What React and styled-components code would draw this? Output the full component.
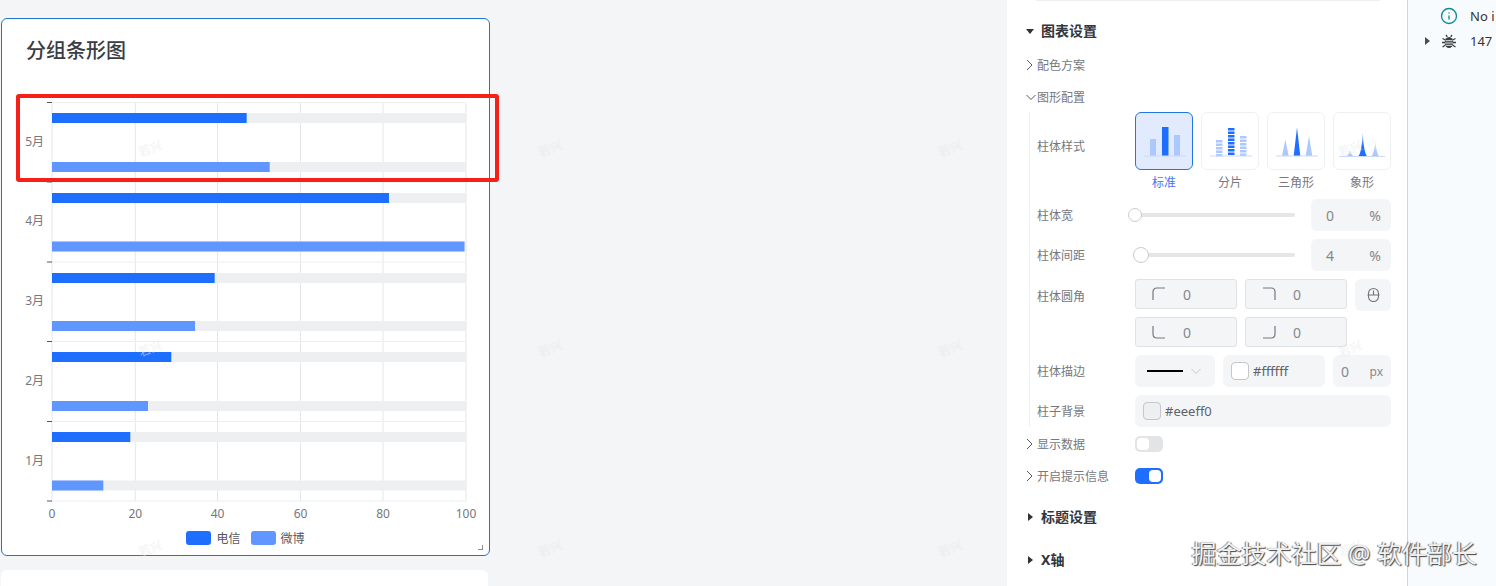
import React from "react";
import styled, { createGlobalStyle } from "styled-components";
import { Info } from "lucide-react";

const FONT = `"Noto Sans", "Noto Sans CJK SC", sans-serif`;

const months = [
  { name: "5月", top: 102.5, bars: [246.7, 269.7], y: [113, 162] },
  { name: "4月", top: 182, bars: [389, 464.5], y: [193, 241.5] },
  { name: "3月", top: 262, bars: [214.7, 195], y: [273, 321] },
  { name: "2月", top: 341.5, bars: [171.3, 148], y: [352, 401] },
  { name: "1月", top: 421.5, bars: [130.3, 103.3], y: [432, 480.5] },
];
const xTicks = [
  { x: 52, label: "0" },
  { x: 135.3, label: "20" },
  { x: 217.5, label: "40" },
  { x: 300.5, label: "60" },
  { x: 383, label: "80" },
  { x: 466, label: "100" },
];
const BLUE = "#1e6fff";
const LIGHT_BLUE = "#6096ff";
const PALE_BLUE = "#abc8ff";

const GroupedBars = () => (
  <ChartSvg viewBox="2 95 486 430" width="486" height="430">
    {xTicks.map((t) => (
      <line key={t.x} x1={t.x} x2={t.x} y1="102.5" y2="501" stroke="#e4e6e9" />
    ))}
    {[...months.map((m) => m.top), 501].map((y) => (
      <g key={y}>
        <line x1="52" x2="466" y1={y} y2={y} stroke="#eceef0" />
        <line x1="47" x2="52" y1={y} y2={y} stroke="#55585e" />
      </g>
    ))}
    {months.map((m) => (
      <g key={m.name}>
        {m.y.map((y, i) => (
          <g key={y}>
            <rect x="52" y={y} width="414" height="10" fill="#eeeff0" />
            <rect x="52" y={y} width={m.bars[i] - 52} height="10" fill={i === 0 ? BLUE : LIGHT_BLUE} />
          </g>
        ))}
        <AxisText x="44" y={m.top + 43} textAnchor="end">
          {m.name}
        </AxisText>
      </g>
    ))}
    {xTicks.map((t) => (
      <AxisText key={t.label} x={t.x} y="518" textAnchor="middle">
        {t.label}
      </AxisText>
    ))}
  </ChartSvg>
);

const Baseline = () => <line x1="9" x2="51" y1="44" y2="44" stroke="#c9dafc" strokeWidth="1" />;

const ColumnIcon = () => (
  <svg width="58" height="58" viewBox="0 0 58 58">
    <rect x="15" y="27" width="6" height="17" fill={PALE_BLUE} />
    <rect x="27" y="15" width="6.5" height="29" fill={BLUE} />
    <rect x="39" y="23" width="6" height="21" fill={PALE_BLUE} />
    <Baseline />
  </svg>
);

const Slices = ({ x, top, fill }) => {
  const rows = [];
  for (let y = top; y < 43; y += 3.5) rows.push(y);
  return rows.map((y) => <rect key={y} x={x} y={y} width="6.5" height="2.5" fill={fill} />);
};

const SliceIcon = () => (
  <svg width="58" height="58" viewBox="0 0 58 58">
    <Slices x={15} top={28} fill={PALE_BLUE} />
    <Slices x={27} top={16} fill={BLUE} />
    <Slices x={39} top={24} fill={PALE_BLUE} />
    <Baseline />
  </svg>
);

const TriangleIcon = () => (
  <svg width="58" height="58" viewBox="0 0 58 58">
    <path d="M15 44 L18.3 27.5 L21.7 44Z" fill={PALE_BLUE} />
    <path d="M26.7 44 L30 15.5 L33.3 44Z" fill={BLUE} />
    <path d="M38.7 44 L42 24 L45.3 44Z" fill={PALE_BLUE} />
    <Baseline />
  </svg>
);

const PictorialIcon = () => (
  <svg width="58" height="58" viewBox="0 0 58 58">
    <defs>
      <linearGradient id="spikeDark" x1="0" y1="0" x2="0" y2="1">
        <stop offset="0" stopColor={BLUE} stopOpacity="0.1" />
        <stop offset="0.6" stopColor={BLUE} />
      </linearGradient>
      <linearGradient id="spikePale" x1="0" y1="0" x2="0" y2="1">
        <stop offset="0" stopColor={PALE_BLUE} stopOpacity="0.1" />
        <stop offset="0.7" stopColor={PALE_BLUE} />
      </linearGradient>
    </defs>
    <path d="M13 44.5 Q16 43 17 37 Q18 43 21 44.5Z" fill="url(#spikePale)" />
    <path d="M25 44.5 Q28.7 42 29.7 19 Q30.7 42 34.5 44.5Z" fill="url(#spikeDark)" />
    <path d="M38 44.5 Q41.3 42 42.3 28 Q43.3 42 46.5 44.5Z" fill="url(#spikePale)" />
    <line x1="6" x2="52" y1="44.5" y2="44.5" stroke="#c9dafc" />
  </svg>
);

const styleOptions = [
  { label: "标准", Icon: ColumnIcon, active: true },
  { label: "分片", Icon: SliceIcon },
  { label: "三角形", Icon: TriangleIcon },
  { label: "象形", Icon: PictorialIcon },
];

const corners = [
  "M1 13 V5 Q1 1 5 1 H13",
  "M1 1 H9 Q13 1 13 5 V13",
  "M1 1 V9 Q1 13 5 13 H13",
  "M13 1 V9 Q13 13 9 13 H1",
];

const CornerInput = ({ d }) => (
  <CornerBox>
    <svg width="14" height="14" viewBox="0 0 14 14" fill="none" stroke="#75787e" strokeWidth="1.2">
      <path d={d} />
    </svg>
    <span>0</span>
  </CornerBox>
);

const ArrowRight = () => (
  <svg width="11" height="12" viewBox="0 0 11 12" fill="none" stroke="#55585e" strokeWidth="1">
    <path d="M1 1 L6 6 L1 11" />
  </svg>
);

const ArrowDown = ({ color = "#55585e" }) => (
  <svg width="11" height="7" viewBox="0 0 11 7" fill="none" stroke={color} strokeWidth="1">
    <path d="M0.5 1 L5 5.5 L9.5 1" />
  </svg>
);

const LinkIcon = () => (
  <svg width="13" height="16" viewBox="0 0 13 16" fill="none" stroke="#6f7278" strokeWidth="1.1">
    <rect x="1.5" y="1.5" width="10" height="13" rx="5" />
    <path d="M0.5 8 H12.5 M6.5 3.5 V8" />
  </svg>
);

const BugIcon = () => (
  <svg width="16" height="16" viewBox="0 0 16 16">
    <g stroke="#3b3e42" strokeWidth="1.3" fill="none">
      <path d="M5 2 L6.3 3.8 M11 2 L9.7 3.8 M1.5 5.5 L4.5 7 M14.5 5.5 L11.5 7 M1 9.5 H4 M15 9.5 H12 M1.5 14 L4.5 12 M14.5 14 L11.5 12" />
    </g>
    <ellipse cx="8" cy="9.5" rx="4.3" ry="5.5" fill="#3b3e42" />
    <path d="M4.5 7.7 H11.5 M4 10 H12 M4.5 12.3 H11.5" stroke="#f7fbfe" strokeWidth="0.9" />
  </svg>
);

const stamps = Array.from({ length: 12 }, (_, i) => i);

export default function App() {
  return (
    <Page>
      <GlobalStyle />
      <LeftColumn>
        <ChartCard>
          <CardTitle>分组条形图</CardTitle>
          <GroupedBars />
          <Legend>
            <LegendItem>
              <Swatch $color={BLUE} />
              电信
            </LegendItem>
            <LegendItem>
              <Swatch $color={LIGHT_BLUE} />
              微博
            </LegendItem>
          </Legend>
          <ResizeHandle />
        </ChartCard>
        <NextCard />
      </LeftColumn>
      <Canvas />
      <SettingsPanel>
        <TopRule />
        <SectionHeader $gap={19}>
          <DownArrow />
          图表设置
        </SectionHeader>
        <SubRow $gap={13}>
          <Chevron>
            <ArrowRight />
          </Chevron>
          配色方案
        </SubRow>
        <SubRow $gap={12}>
          <Chevron>
            <ArrowDown />
          </Chevron>
          图形配置
        </SubRow>
        <Form>
          <FormRow>
            <FieldLabel $top={25}>柱体样式</FieldLabel>
            <StyleGrid>
              {styleOptions.map(({ label, Icon, active }) => (
                <StyleOption key={label} $active={active}>
                  <StyleThumb $active={active}>
                    <Icon />
                  </StyleThumb>
                  <OptionName>{label}</OptionName>
                </StyleOption>
              ))}
            </StyleGrid>
          </FormRow>
          <FormRow>
            <FieldLabel>柱体宽</FieldLabel>
            <SliderRow>
              <Track>
                <Thumb $size={14} style={{ left: "0%" }} />
              </Track>
              <UnitInput>
                <span>0</span>
                <span>%</span>
              </UnitInput>
            </SliderRow>
          </FormRow>
          <FormRow>
            <FieldLabel>柱体间距</FieldLabel>
            <SliderRow>
              <Track>
                <Thumb $size={16} style={{ left: "4%" }} />
              </Track>
              <UnitInput>
                <span>4</span>
                <span>%</span>
              </UnitInput>
            </SliderRow>
          </FormRow>
          <FormRow>
            <FieldLabel $top={8}>柱体圆角</FieldLabel>
            <CornerGrid>
              <CornerInput d={corners[0]} />
              <CornerInput d={corners[1]} />
              <LinkButton>
                <LinkIcon />
              </LinkButton>
              <CornerInput d={corners[2]} />
              <CornerInput d={corners[3]} />
            </CornerGrid>
          </FormRow>
          <FormRow>
            <FieldLabel>柱体描边</FieldLabel>
            <StrokeRow>
              <StrokeSelect>
                <StrokeLine />
                <ArrowDown color="#c4c6ca" />
              </StrokeSelect>
              <ColorInput>
                <ColorChip $color="#ffffff" />
                #ffffff
              </ColorInput>
              <PxInput>
                <span>0</span>
                <small>px</small>
              </PxInput>
            </StrokeRow>
          </FormRow>
          <FormRow>
            <FieldLabel>柱子背景</FieldLabel>
            <ColorInput>
              <ColorChip $color="#eeeff0" />
              #eeeff0
            </ColorInput>
          </FormRow>
        </Form>
        <SubRow $gap={7}>
          <Chevron>
            <ArrowRight />
          </Chevron>
          <SubLabel>显示数据</SubLabel>
          <Switch />
        </SubRow>
        <SubRow $gap={12}>
          <Chevron>
            <ArrowRight />
          </Chevron>
          <SubLabel>开启提示信息</SubLabel>
          <Switch $on />
        </SubRow>
        <SectionHeader $gap={20}>
          <RightArrow />
          标题设置
        </SectionHeader>
        <SectionHeader $gap={21}>
          <RightArrow />
          X轴
        </SectionHeader>
      </SettingsPanel>
      <Sider>
        <SiderRow>
          <span />
          <Info size={18} color="#0f8b93" strokeWidth={1.8} />
          <span>No i</span>
        </SiderRow>
        <SiderRow>
          <SiderArrow />
          <BugSlot>
            <BugIcon />
          </BugSlot>
          <span>147</span>
        </SiderRow>
      </Sider>
      <Annotation />
      <StampLayer>
        {stamps.map((i) => (
          <Stamp key={i}>
            <span>若兴</span>
          </Stamp>
        ))}
      </StampLayer>
      <SiteMark>掘金技术社区 @ 软件部长</SiteMark>
    </Page>
  );
}

const GlobalStyle = createGlobalStyle`
  html, body {
    margin: 0;
    overflow: hidden;
    background: #f4f5f7;
    font-family: ${FONT};
  }
`;

const Page = styled.div`
  position: relative;
  display: flex;
  width: 1496px;
  height: 586px;
  overflow: hidden;
  background: #f4f5f7;
`;

const LeftColumn = styled.div`
  width: 489px;
  margin-left: 1px;
  padding-top: 18px;
  flex: none;
`;

const ChartCard = styled.section`
  position: relative;
  box-sizing: border-box;
  height: 538px;
  background: #fff;
  border: 1px solid #2176c9;
  border-radius: 6px;
`;

const CardTitle = styled.h2`
  margin: 18px 0 30px 24px;
  font-size: 20px;
  line-height: 28px;
  font-weight: 500;
  color: #3a3d44;
`;

const ChartSvg = styled.svg`
  display: block;
`;

const AxisText = styled.text`
  font-family: ${FONT};
  font-size: 12px;
  fill: #74777d;
`;

const Legend = styled.div`
  display: flex;
  justify-content: center;
  gap: 10px;
  padding-top: 6px;
`;

const LegendItem = styled.div`
  display: flex;
  align-items: center;
  gap: 5px;
  height: 14px;
  font-size: 12px;
  color: #55585e;
`;

const Swatch = styled.i`
  width: 25px;
  height: 14px;
  border-radius: 3px;
  background: ${(p) => p.$color};
`;

const ResizeHandle = styled.span`
  position: absolute;
  right: 6px;
  bottom: 5px;
  width: 4px;
  height: 4px;
  border-right: 1px solid #8a8d93;
  border-bottom: 1px solid #8a8d93;
`;

const NextCard = styled.div`
  width: 487px;
  height: 60px;
  margin-top: 14px;
  background: #fff;
  border-radius: 6px;
`;

const Canvas = styled.main`
  flex: 1;
`;

const SettingsPanel = styled.aside`
  box-sizing: border-box;
  width: 401px;
  flex: none;
  padding-left: 19px;
  background: #fff;
  border-right: 1px solid #a6e6ef;
`;

const TopRule = styled.div`
  height: 1px;
  width: 344px;
  margin-left: 10px;
  background: #eceef0;
`;

const SectionHeader = styled.div`
  box-sizing: border-box;
  display: flex;
  align-items: center;
  height: 22px;
  padding-bottom: 2px;
  margin-top: ${(p) => p.$gap}px;
  font-size: 14px;
  font-weight: 700;
  color: #33363b;
`;

const DownArrow = styled.i`
  width: 0;
  height: 0;
  margin: 2px 7px 0 0;
  border-left: 4px solid transparent;
  border-right: 4px solid transparent;
  border-top: 5px solid #2f3237;
`;

const RightArrow = styled.i`
  width: 0;
  height: 0;
  margin: 2px 8px 0 2px;
  border-top: 4px solid transparent;
  border-bottom: 4px solid transparent;
  border-left: 5px solid #2f3237;
`;

const SubRow = styled.div`
  display: flex;
  align-items: center;
  height: 20px;
  margin-top: ${(p) => p.$gap}px;
  font-size: 12px;
  color: #75787e;
`;

const Chevron = styled.span`
  display: flex;
  width: 11px;
  svg {
    flex: none;
  }
`;

const SubLabel = styled.span`
  width: 98px;
`;

const Form = styled.div`
  display: flex;
  flex-direction: column;
  gap: 8px;
  margin: 5px 0 0 3px;
  padding-left: 7px;
  border-left: 1px solid #eceef0;
`;

const FormRow = styled.div`
  display: grid;
  grid-template-columns: 98px 256px;
`;

const FieldLabel = styled.label`
  font-size: 12px;
  line-height: 20px;
  color: #75787e;
  align-self: ${(p) => (p.$top ? "start" : "center")};
  padding-top: ${(p) => p.$top || 2}px;
`;

const StyleGrid = styled.div`
  display: flex;
  gap: 8px;
`;

const StyleOption = styled.div`
  width: 58px;
  text-align: center;
  color: ${(p) => (p.$active ? "#4c76e8" : "#75787e")};
`;

const OptionName = styled.div`
  margin-top: 4px;
  font-size: 12px;
  line-height: 17px;
`;

const StyleThumb = styled.div`
  box-sizing: border-box;
  width: 58px;
  height: 58px;
  overflow: hidden;
  border-radius: 6px;
  border: 1px solid ${(p) => (p.$active ? "#2176e0" : "#eff0f2")};
  background: ${(p) => (p.$active ? "#e2ebfd" : "#fff")};
  svg {
    display: block;
    margin: -1px;
  }
`;

const SliderRow = styled.div`
  display: flex;
  align-items: center;
  gap: 16px;
`;

const Track = styled.div`
  position: relative;
  width: 160px;
  height: 4px;
  border-radius: 2px;
  background: #e5e6e8;
`;

const Thumb = styled.span`
  position: absolute;
  top: 50%;
  box-sizing: border-box;
  width: ${(p) => p.$size}px;
  height: ${(p) => p.$size}px;
  transform: translate(-50%, -50%);
  background: #fff;
  border: 1.5px solid #c9cbcf;
  border-radius: 50%;
`;

const FilledBox = styled.div`
  box-sizing: border-box;
  display: flex;
  align-items: center;
  height: 32px;
  background: #f4f5f7;
  border-radius: 6px;
  font-size: 14px;
  color: #85888e;
`;

const UnitInput = styled(FilledBox)`
  width: 80px;
  justify-content: space-between;
  padding: 0 10px 0 15px;
`;

const CornerGrid = styled.div`
  display: grid;
  grid-template-columns: 102px 102px 36px;
  grid-auto-rows: 30px;
  column-gap: 8px;
  row-gap: 8px;
`;

const CornerBox = styled.div`
  box-sizing: border-box;
  display: flex;
  align-items: center;
  gap: 17px;
  padding-left: 16px;
  background: #f4f5f7;
  border: 1px solid #dfe1e4;
  border-radius: 3px;
  font-size: 14px;
  color: #85888e;
`;

const LinkButton = styled(FilledBox)`
  justify-content: center;
`;

const StrokeRow = styled.div`
  display: flex;
  gap: 8px;
`;

const StrokeSelect = styled(FilledBox)`
  width: 80px;
  flex: none;
  gap: 8px;
  padding-left: 12px;
`;

const StrokeLine = styled.i`
  width: 36px;
  height: 2px;
  background: #000;
`;

const ColorInput = styled(FilledBox)`
  flex: 1;
  gap: 4px;
  padding-left: 8px;
  font-size: 13px;
  color: #5f6268;
`;

const ColorChip = styled.i`
  box-sizing: border-box;
  width: 18px;
  height: 18px;
  border-radius: 4px;
  border: 1px solid #c4c6ca;
  background: ${(p) => p.$color};
`;

const PxInput = styled(FilledBox)`
  width: 58px;
  flex: none;
  justify-content: space-between;
  padding: 0 8px;
  small {
    font-size: 12px;
  }
`;

const Switch = styled.span`
  box-sizing: border-box;
  display: flex;
  justify-content: ${(p) => (p.$on ? "flex-end" : "flex-start")};
  width: 28px;
  height: 16px;
  padding: 2px;
  border-radius: 5px;
  background: ${(p) => (p.$on ? BLUE : "#e3e4e6")};
  &::after {
    content: "";
    width: 12px;
    height: 12px;
    border-radius: 4px;
    background: #fff;
  }
`;

const Sider = styled.aside`
  flex: none;
  width: 88px;
  box-sizing: border-box;
  padding: 7px 0 0 17px;
  background: #f7fbfe;
  display: flex;
  flex-direction: column;
  gap: 7px;
`;

const SiderRow = styled.div`
  display: grid;
  grid-template-columns: 15px 18px 1fr;
  align-items: center;
  justify-items: start;
  height: 18px;
  font-size: 13px;
  color: #333;
  white-space: nowrap;
  span:last-child {
    margin-left: 12px;
  }
`;

const BugSlot = styled.div`
  display: flex;
  margin-left: 1px;
`;

const SiderArrow = styled.i`
  width: 0;
  height: 0;
  border-top: 4px solid transparent;
  border-bottom: 4px solid transparent;
  border-left: 5px solid #4a4d52;
`;

const Annotation = styled.div`
  position: absolute;
  left: 16px;
  top: 94px;
  box-sizing: border-box;
  width: 483px;
  height: 88px;
  border: 4px solid #f5201a;
  border-radius: 3px;
  pointer-events: none;
`;

const StampLayer = styled.div`
  position: absolute;
  left: -50px;
  top: 48px;
  display: grid;
  grid-template-columns: repeat(4, 400px);
  grid-auto-rows: 200px;
  pointer-events: none;
`;

const Stamp = styled.div`
  display: flex;
  align-items: center;
  justify-content: center;
  font-size: 12px;
  color: rgba(255, 255, 255, 0.45);
  text-shadow: 0 0 1px rgba(150, 150, 150, 0.2);
  span {
    transform: rotate(-20deg);
  }
`;

const SiteMark = styled.div`
  position: absolute;
  right: 19px;
  bottom: 16px;
  font-size: 25px;
  line-height: 34px;
  color: #f2f2f2;
  text-shadow: 1px 1px 1px #444, -1px 0 1px #777;
  white-space: nowrap;
`;
